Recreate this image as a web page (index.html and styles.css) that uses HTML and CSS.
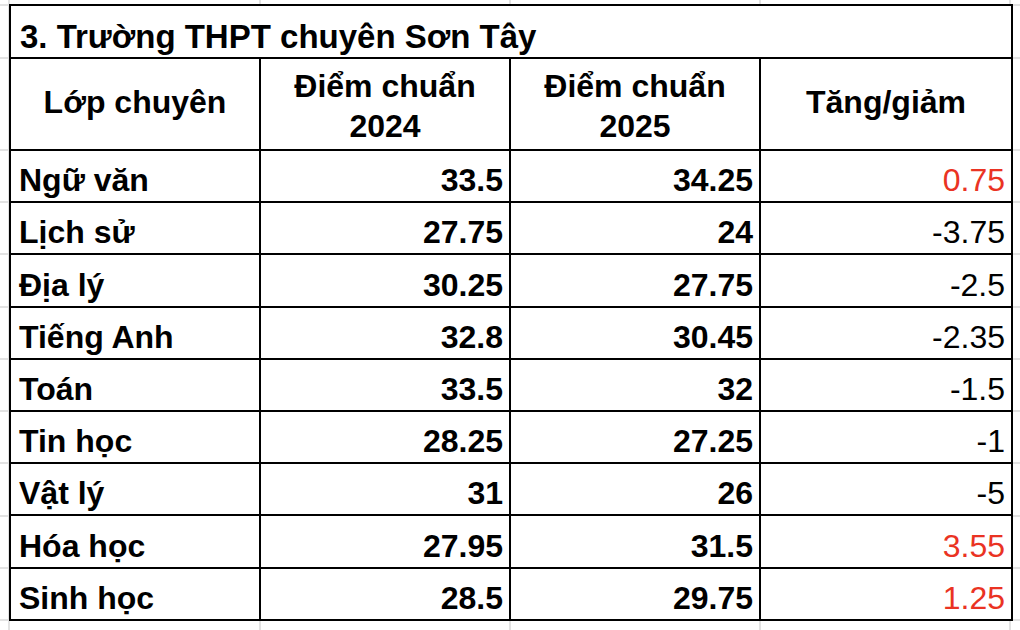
FILE: index.html
```html
<!DOCTYPE html>
<html lang="vi">
<head>
<meta charset="utf-8">
<title>Trường THPT chuyên Sơn Tây</title>
<link rel="stylesheet" href="styles.css">
</head>
<body>
<div class="sheet">
  <table class="scores">
    <colgroup>
      <col class="c1"><col class="c2"><col class="c3"><col class="c4">
    </colgroup>
    <tr class="title-row"><td colspan="4" class="title">3. Trường THPT chuyên Sơn Tây</td></tr>
    <tr class="head-row">
      <th>Lớp chuyên</th>
      <th class="two">Điểm chuẩn<br>2024</th>
      <th class="two">Điểm chuẩn<br>2025</th>
      <th>Tăng/giảm</th>
    </tr>
    <tr><td class="name">Ngữ văn</td><td class="num">33.5</td><td class="num">34.25</td><td class="diff up">0.75</td></tr>
    <tr><td class="name">Lịch sử</td><td class="num">27.75</td><td class="num">24</td><td class="diff">-3.75</td></tr>
    <tr><td class="name">Địa lý</td><td class="num">30.25</td><td class="num">27.75</td><td class="diff">-2.5</td></tr>
    <tr><td class="name">Tiếng Anh</td><td class="num">32.8</td><td class="num">30.45</td><td class="diff">-2.35</td></tr>
    <tr><td class="name">Toán</td><td class="num">33.5</td><td class="num">32</td><td class="diff">-1.5</td></tr>
    <tr><td class="name">Tin học</td><td class="num">28.25</td><td class="num">27.25</td><td class="diff">-1</td></tr>
    <tr><td class="name">Vật lý</td><td class="num">31</td><td class="num">26</td><td class="diff">-5</td></tr>
    <tr><td class="name">Hóa học</td><td class="num">27.95</td><td class="num">31.5</td><td class="diff up">3.55</td></tr>
    <tr><td class="name">Sinh học</td><td class="num">28.5</td><td class="num">29.75</td><td class="diff up">1.25</td></tr>
  </table>
</div>
</body>
</html>
```
FILE: styles.css
```css
html, body {
  margin: 0;
  padding: 0;
}

body {
  width: 1020px;
  height: 630px;
  overflow: hidden;
  background-color: #ffffff;
  background-image:
    linear-gradient(to right,
      transparent 8px, #e2e2e2 8px, #e2e2e2 10px, transparent 10px,
      transparent 259px, #e2e2e2 259px, #e2e2e2 261px, transparent 261px,
      transparent 509px, #e2e2e2 509px, #e2e2e2 511px, transparent 511px,
      transparent 759px, #e2e2e2 759px, #e2e2e2 761px, transparent 761px,
      transparent 1009px, #e2e2e2 1009px, #e2e2e2 1011px, transparent 1011px),
    linear-gradient(to bottom,
      transparent 4px, #e2e2e2 4px, #e2e2e2 6px, transparent 6px,
      transparent 57px, #e2e2e2 57px, #e2e2e2 59px, transparent 59px,
      transparent 149px, #e2e2e2 149px, #e2e2e2 151px, transparent 151px,
      transparent 201px, #e2e2e2 201px, #e2e2e2 203px, transparent 203px,
      transparent 253px, #e2e2e2 253px, #e2e2e2 255px, transparent 255px,
      transparent 306px, #e2e2e2 306px, #e2e2e2 308px, transparent 308px,
      transparent 358px, #e2e2e2 358px, #e2e2e2 360px, transparent 360px,
      transparent 410px, #e2e2e2 410px, #e2e2e2 412px, transparent 412px,
      transparent 462px, #e2e2e2 462px, #e2e2e2 464px, transparent 464px,
      transparent 515px, #e2e2e2 515px, #e2e2e2 517px, transparent 517px,
      transparent 567px, #e2e2e2 567px, #e2e2e2 569px, transparent 569px,
      transparent 619px, #e2e2e2 619px, #e2e2e2 621px, transparent 621px);
  font-family: "Liberation Sans", Arial, sans-serif;
  color: #000000;
}

.sheet {
  padding: 4px 0 0 9px;
}

.scores {
  border-collapse: collapse;
  table-layout: fixed;
  width: 1002px;
  background: #ffffff;
  font-size: 32px;
  line-height: 36px;
}

.c1 { width: 250px; }
.c2 { width: 250px; }
.c3 { width: 250px; }
.c4 { width: 252px; }

.scores td,
.scores th {
  border: 2px solid #000000;
  padding: 0 6px 3px 8px;
  vertical-align: bottom;
  white-space: nowrap;
  overflow: hidden;
}

.scores tr {
  height: 52.2px;
}

.scores .title-row {
  height: 53px;
}

.scores .title {
  font-weight: bold;
  text-align: left;
  font-size: 33px;
  padding-left: 9px;
  padding-bottom: 2px;
}

.scores .head-row {
  height: 92px;
}

.scores th {
  font-weight: bold;
  text-align: center;
  vertical-align: middle;
  padding: 0 4px 4px 4px;
}

.scores th.two {
  line-height: 40px;
  padding: 3px 4px 0 4px;
}

.name {
  font-weight: bold;
  text-align: left;
}

.num {
  font-weight: bold;
  text-align: right;
}

.diff {
  font-weight: normal;
  text-align: right;
}

.diff.up {
  color: #ea3323;
}
```
